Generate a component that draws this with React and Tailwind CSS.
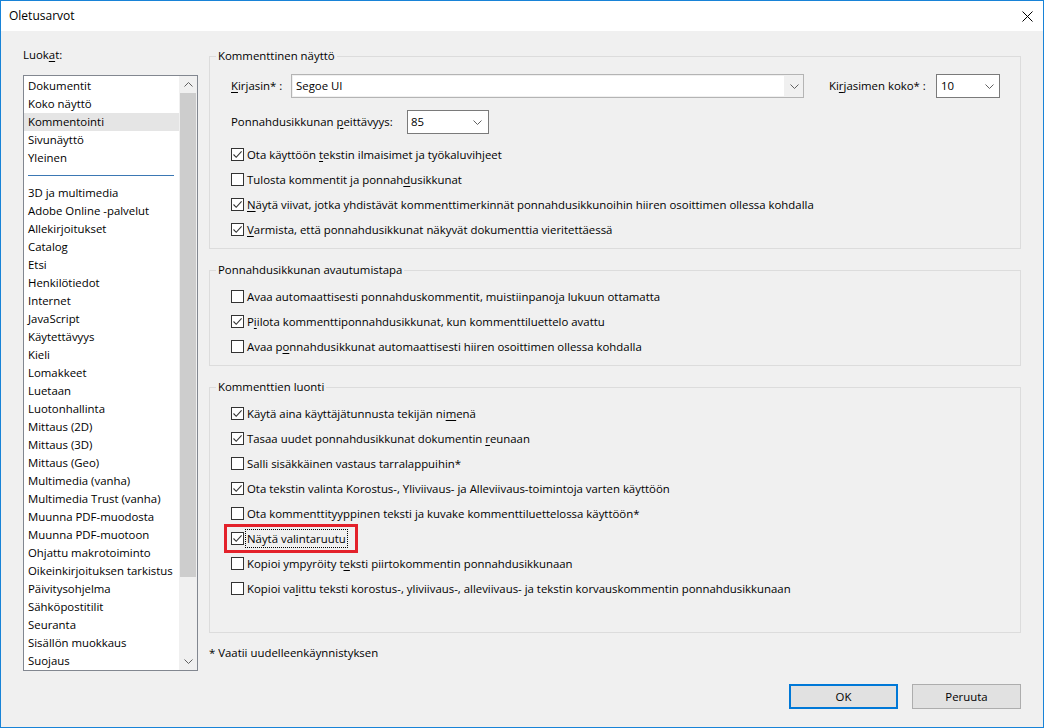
import React from 'react';

const categoriesTop = ['Dokumentit', 'Koko näyttö', 'Kommentointi', 'Sivunäyttö', 'Yleinen'];
const categoriesRest = [
  '3D ja multimedia', 'Adobe Online -palvelut', 'Allekirjoitukset', 'Catalog', 'Etsi',
  'Henkilötiedot', 'Internet', 'JavaScript', 'Käytettävyys', 'Kieli', 'Lomakkeet', 'Luetaan',
  'Luotonhallinta', 'Mittaus (2D)', 'Mittaus (3D)', 'Mittaus (Geo)', 'Multimedia (vanha)',
  'Multimedia Trust (vanha)', 'Muunna PDF-muodosta', 'Muunna PDF-muotoon', 'Ohjattu makrotoiminto',
  'Oikeinkirjoituksen tarkistus', 'Päivitysohjelma', 'Sähköpostitilit', 'Seuranta',
  'Sisällön muokkaus', 'Suojaus',
];

const displayOptions = [
  { label: 'Ota käyttöön &tekstin ilmaisimet ja työkaluvihjeet', checked: true },
  { label: 'Tulosta kommentit ja ponnah&dusikkunat', checked: false },
  { label: '&Näytä viivat, jotka yhdistävät kommenttimerkinnät ponnahdusikkunoihin hiiren osoittimen ollessa kohdalla', checked: true },
  { label: '&Varmista, että ponnahdusikkunat näkyvät dokumenttia vieritettäessä', checked: true },
];

const popupOptions = [
  { label: 'Avaa automaattisesti ponnahduskommentit, muistiinpano&ja lukuun ottamatta', checked: false },
  { label: 'P&iilota kommenttiponnahdusikkunat, kun kommenttiluettelo avattu', checked: true },
  { label: 'Avaa p&onnahdusikkunat automaattisesti hiiren osoittimen ollessa kohdalla', checked: false },
];

const createOptions = [
  { label: 'Käytä aina käyttäjätunnusta tekijän ni&menä', checked: true },
  { label: 'Tasaa uudet ponnahdusikkunat dokumentin &reunaan', checked: true },
  { label: 'Salli sisäkkäinen vastaus tarralappuihin*', checked: false },
  { label: 'Ota tekstin valinta Korostus-, Yliviivaus- ja Alleviivaus-toimintoja varten käyttöön', checked: true },
  { label: 'Ota kommenttityyppinen teksti ja kuvake kommenttiluettelossa käyttöön*', checked: false },
  { label: 'Näytä valintaruutu', checked: true, focused: true },
  { label: 'Kopioi ympyröity t&eksti piirtokommentin ponnahdusikkunaan', checked: false },
  { label: 'Kopioi va&littu teksti korostus-, yliviivaus-, alleviivaus- ja tekstin korvauskommentin ponnahdusikkunaan', checked: false },
];

// "&" marks the keyboard accelerator letter
function Acc({ t }) {
  const i = t.indexOf('&');
  if (i < 0) return t;
  return (
    <>
      {t.slice(0, i)}
      <span className="underline underline-offset-[2px]">{t[i + 1]}</span>
      {t.slice(i + 2)}
    </>
  );
}

function Chevron({ up }) {
  return (
    <svg width="9" height="5" viewBox="0 0 9 5" className="shrink-0">
      <path d={up ? 'M0.5 4.5 L4.5 0.5 L8.5 4.5' : 'M0.5 0.5 L4.5 4.5 L8.5 0.5'} fill="none" stroke="#606060" strokeWidth="1" />
    </svg>
  );
}

function CheckRow({ label, checked, focused }) {
  return (
    <div className="relative h-[25px] flex items-center">
      <span className="w-[13px] h-[13px] border border-[#333333] bg-white flex items-center justify-center shrink-0">
        {checked && (
          <svg width="11" height="11" viewBox="0 0 11 11">
            <path d="M1.5 5.5 L4.2 8.3 L9.6 2.3" fill="none" stroke="#333333" strokeWidth="1.1" />
          </svg>
        )}
      </span>
      {focused ? (
        <span className="ml-[1px] px-[1px] border border-dotted border-black leading-[17px]">{label}</span>
      ) : (
        <span className="ml-[3px] whitespace-nowrap">
          <Acc t={label} />
        </span>
      )}
      {focused && (
        <span className="absolute -left-[7px] -top-[2px] w-[134px] h-[29px] border-[3px] border-[#e3212a]" />
      )}
    </div>
  );
}

function Group({ title, className, children }) {
  return (
    <fieldset className={`border border-[#dcdcdc] ${className}`}>
      <legend className="ml-[6px] px-[2px] leading-[16px]">{title}</legend>
      {children}
    </fieldset>
  );
}

export default function App() {
  return (
    <div className="w-[1044px] h-[728px] border border-[#1883d7] bg-[#f0f0f0] flex flex-col overflow-hidden text-black text-[11.4px] leading-[16px] font-['Open_Sans',sans-serif]">
      {/* title bar */}
      <div className="h-[30px] bg-white flex items-center justify-between pl-[8px] pr-[10px] shrink-0">
        <span className="text-[12px]">Oletusarvot</span>
        <svg width="11" height="11" viewBox="0 0 11 11">
          <path d="M0.5 0.5 L10.5 10.5 M10.5 0.5 L0.5 10.5" stroke="#000" strokeWidth="1" />
        </svg>
      </div>

      <div className="flex flex-1 pl-[22px]">
        {/* categories */}
        <div className="w-[175px] pt-[16px] flex flex-col">
          <div className="h-[16px]">
            Luok<span className="underline underline-offset-[2px]">a</span>t:
          </div>
          <div className="mt-[12px] h-[596px] border border-[#828790] bg-white flex">
            <div className="w-[155px] pt-[1px] flex flex-col">
              {categoriesTop.map((c) => (
                <div
                  key={c}
                  className={`h-[18px] leading-[18px] pl-[4px] whitespace-nowrap ${c === 'Kommentointi' ? 'bg-[#e5e5e5]' : ''}`}
                >
                  {c}
                </div>
              ))}
              <div className="h-[18px] flex items-center pl-[4px] pr-[5px]">
                <div className="h-[1px] w-full bg-[#3b78b4]" />
              </div>
              {categoriesRest.map((c) => (
                <div key={c} className="h-[18px] leading-[18px] pl-[4px] whitespace-nowrap">
                  {c}
                </div>
              ))}
            </div>
            <div className="w-[18px] bg-[#f0f0f0] flex flex-col">
              <div className="h-[17px] flex items-center justify-center">
                <Chevron up />
              </div>
              <div className="h-[484px] mx-[1px] bg-[#cdcdcd]" />
              <div className="flex-1" />
              <div className="h-[17px] flex items-center justify-center">
                <Chevron />
              </div>
            </div>
          </div>
        </div>

        {/* settings */}
        <div className="ml-[11px] w-[812px] flex flex-col">
          <Group title="Kommenttinen näyttö" className="mt-[17px]">
            <div className="pl-[21px] pt-[10px] pb-[6px]">
              <div className="h-[24px] flex items-center">
                <span className="w-[60px] whitespace-nowrap">
                  <Acc t="&Kirjasin* :" />
                </span>
                <div className="w-[513px] h-[24px] border border-[#b4b4b4] bg-[#f0f0f0] flex">
                  <div className="flex-1 m-[1px] bg-white pl-[3px] flex items-center">Segoe UI</div>
                  <div className="w-[18px] flex items-center justify-center">
                    <Chevron />
                  </div>
                </div>
                <span className="ml-[25px] w-[107px] whitespace-nowrap">
                  <Acc t="Ki&rjasimen koko* :" />
                </span>
                <div className="w-[64px] h-[24px] border border-[#7a7a7a] bg-white flex items-center justify-between pl-[4px] pr-[5px]">
                  <span>10</span>
                  <Chevron />
                </div>
              </div>
              <div className="mt-[12px] h-[24px] flex items-center">
                <span className="w-[176px] whitespace-nowrap">
                  <Acc t="Ponnahdusikkunan &peittävyys:" />
                </span>
                <div className="w-[82px] h-[24px] border border-[#7a7a7a] bg-white flex items-center justify-between pl-[3px] pr-[6px]">
                  <span>85</span>
                  <Chevron />
                </div>
              </div>
              <div className="mt-[8px]">
                {displayOptions.map((o) => (
                  <CheckRow key={o.label} {...o} />
                ))}
              </div>
            </div>
          </Group>

          <Group title="Ponnahdusikkunan avautumistapa" className="mt-[13px]">
            <div className="pl-[21px] pt-[6px] pb-[6px]">
              {popupOptions.map((o) => (
                <CheckRow key={o.label} {...o} />
              ))}
            </div>
          </Group>

          <Group title="Kommenttien luonti" className="mt-[13px]">
            <div className="pl-[21px] pt-[6px] pb-[31px]">
              {createOptions.map((o) => (
                <CheckRow key={o.label} {...o} />
              ))}
            </div>
          </Group>

          <div className="mt-[12px] h-[16px]">* Vaatii uudelleenkäynnistyksen</div>

          <div className="mt-[23px] flex justify-end gap-[14px]">
            <button className="w-[109px] h-[25px] border-2 border-[#0078d7] bg-[#e1e1e1]">OK</button>
            <button className="w-[109px] h-[25px] border border-[#adadad] bg-[#e1e1e1]">Peruuta</button>
          </div>
        </div>
      </div>
    </div>
  );
}
